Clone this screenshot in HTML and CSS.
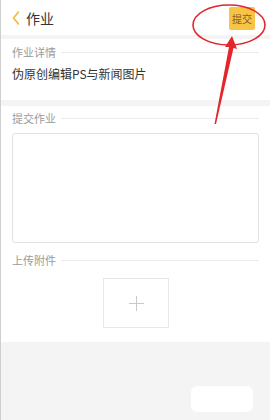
FILE: index.html
```html
<!DOCTYPE html>
<html lang="zh">
<head>
<meta charset="utf-8">
<link rel="stylesheet" href="styles.css">
</head>
<body>
<div class="page">
  <header class="topbar">
    <div class="back">
      <svg class="back-icon" width="8" height="14" viewBox="0 0 8 14"><path d="M6.5 1 L1.5 7 L6.5 13" fill="none" stroke="#f1b73c" stroke-width="1.6" stroke-linecap="round" stroke-linejoin="round"/></svg>
      <span class="title">作业</span>
    </div>
    <button class="submit">提交</button>
  </header>
  <div class="band band-sm"></div>
  <section class="sec sec-detail">
    <div class="sec-label"><span>作业详情</span><i class="rule"></i></div>
    <div class="detail-text">伪原创编辑PS与新闻图片</div>
  </section>
  <div class="band band-md"></div>
  <section class="sec sec-submit">
    <div class="sec-label"><span>提交作业</span><i class="rule"></i></div>
    <div class="textbox"></div>
    <div class="sec-label label-upload"><span>上传附件</span><i class="rule"></i></div>
    <div class="upload-row">
      <div class="upload"><span class="plus-h"></span><span class="plus-v"></span></div>
    </div>
  </section>
  <footer class="foot">
    <div class="pill"></div>
  </footer>
  <svg class="annot" width="270" height="140" viewBox="0 0 270 140">
    <ellipse cx="229" cy="25" rx="36" ry="20" fill="none" stroke="#e3262b" stroke-width="1.6"/>
    <polygon points="232,36 237,49 233.5,48 216,124 214.5,124 229,47 225,47" fill="#e3262b"/>
  </svg>
</div>
</body>
</html>
```
FILE: styles.css
```css
* { box-sizing: border-box; margin: 0; padding: 0; }
html, body { width: 270px; height: 420px; overflow: hidden; }
body {
  background: #fff;
  font-family: "Noto Sans CJK SC", "Noto Sans", sans-serif;
}
.page {
  position: relative;
  width: 270px;
  height: 420px;
  display: flex;
  flex-direction: column;
  border-left: 1px solid #cfcfcf;
}
.topbar {
  height: 35px;
  display: flex;
  align-items: center;
  justify-content: space-between;
  padding: 0 15px 0 11px;
  background: #fff;
}
.back { display: flex; align-items: center; gap: 6px; }
.back-icon { display: block; }
.title { font-size: 14px; color: #333; line-height: 18px; }
.submit {
  width: 26px;
  height: 23px;
  border: none;
  border-radius: 2px;
  background: #f7c445;
  color: #8b5a1e;
  font-family: inherit;
  font-size: 10px;
  line-height: 23px;
  text-align: center;
  margin-top: 2px;
  padding: 0;
}
.band { background: #f4f4f4; }
.band-sm { height: 4px; }
.band-md { height: 6px; }
.sec { padding: 0 11px; }
.sec-detail { height: 61px; padding-top: 5px; }
.sec-label {
  display: flex;
  align-items: center;
  gap: 5px;
  height: 16px;
  font-size: 11px;
  color: #9a9a9a;
}
.rule { flex: 1; height: 1px; background: #ececec; }
.detail-text {
  margin-top: 5px;
  font-size: 12px;
  line-height: 18px;
  color: #333;
}
.sec-submit { padding-top: 4px; }
.textbox {
  margin-top: 7px;
  height: 110px;
  border: 1px solid #e2e2e2;
  border-radius: 3px;
}
.label-upload { margin-top: 9px; }
.upload-row { display: flex; justify-content: center; padding: 10px 0 14px; }
.upload {
  position: relative;
  width: 66px;
  height: 50px;
  border: 1px solid #e8e8e8;
}
.plus-h, .plus-v { position: absolute; background: #c8c8c8; }
.plus-h { left: 25px; top: 24px; width: 15px; height: 1px; }
.plus-v { left: 32px; top: 17px; width: 1px; height: 15px; }
.foot {
  flex: 1;
  background: #f4f4f4;
  display: flex;
  justify-content: flex-end;
  align-items: flex-start;
  padding: 44px 17px 0 0;
}
.pill { width: 62px; height: 26px; border-radius: 6px; background: #fff; }
.annot { position: absolute; left: -1px; top: 0; pointer-events: none; }
```
